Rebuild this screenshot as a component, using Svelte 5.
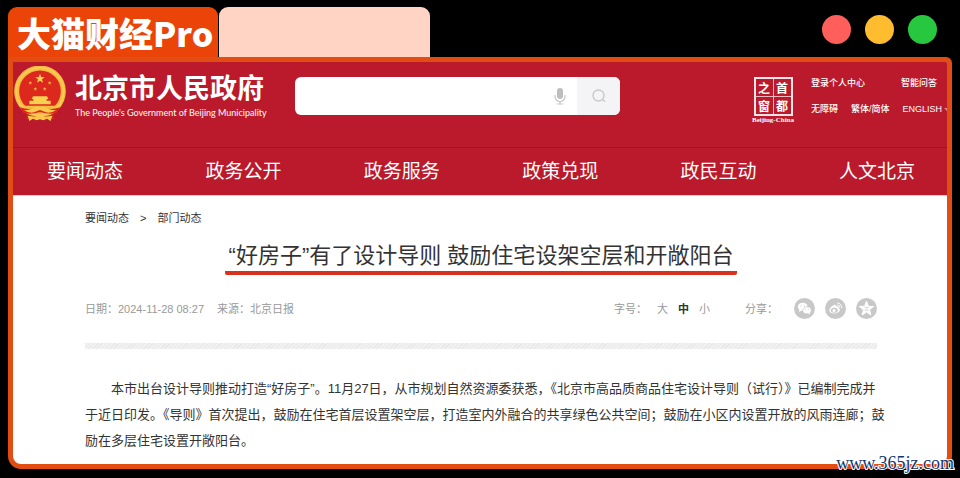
<script>
  const nav = ['要闻动态', '政务公开', '政务服务', '政策兑现', '政民互动', '人文北京'];
  const sizes = ['大', '中', '小'];
  let size = $state('中');
  let query = $state('');

  function star(cx, cy, r) {
    const pts = [];
    for (let i = 0; i < 10; i++) {
      const a = (Math.PI / 5) * i - Math.PI / 2;
      const d = i % 2 ? r * 0.42 : r;
      pts.push(`${(cx + d * Math.cos(a)).toFixed(1)},${(cy + d * Math.sin(a)).toFixed(1)}`);
    }
    return pts.join(' ');
  }
</script>

<div class="page">
  <div class="tabs">
    <div class="tab active">大猫财经Pro</div>
    <div class="tab blank"></div>
    <div class="lights"><i class="red"></i><i class="amber"></i><i class="green"></i></div>
  </div>

  <div class="window">
    <header>
      <a class="brand" href="#home">
        <svg class="emblem" viewBox="0 0 156 168" aria-hidden="true">
          <path d="M42 128 L114 128 L122 160 L34 160 Z" fill="#cc2226" />
          <circle cx="78" cy="76" r="70" fill="#dd291d" stroke="#f5bb43" stroke-width="15" />
          <circle cx="78" cy="76" r="71" fill="none" stroke="#f9ca52" stroke-width="6" />
          <polygon points={star(78, 38, 15)} fill="#fbd050" />
          <polygon points={star(49, 51, 6)} fill="#f6b247" />
          <polygon points={star(107, 51, 6)} fill="#f6b247" />
          <polygon points={star(64, 69, 6)} fill="#f6b247" />
          <polygon points={star(92, 69, 6)} fill="#f6b247" />
          <path d="M57 91 H99 L103 99 H98 V104 H110 V115 H46 V104 H58 V99 H53 Z" fill="#fbd050" />
          <path d="M24 119 H132 L122 131 H34 Z" fill="#f4bd43" />
          <path d="M18 124 Q46 134 62 125 Q78 120 94 125 Q110 134 138 124 L128 141 Q104 146 78 138 Q52 146 28 141 Z" fill="#dc291e" />
          <path d="M56 126 Q78 116 100 126 Q112 134 126 133 Q106 146 88 136 L78 132 L68 136 Q50 146 30 133 Q44 134 56 126 Z" fill="#f8c84a" />
          <path d="M78 145 L92 152 L115 149 L110 165 L99 158 L88 163 L78 160 L68 163 L57 158 L46 165 L41 149 L64 152 Z" fill="#f8c84a" />
        </svg>
        <span class="names">
          <strong>北京市人民政府</strong>
          <small>The People's Government of Beijing Municipality</small>
        </span>
      </a>

      <form class="search" role="search" onsubmit={(e) => e.preventDefault()}>
        <input type="text" aria-label="搜索" bind:value={query} />
        <button type="button" class="mic" aria-label="语音输入">
          <svg viewBox="0 0 12 18" aria-hidden="true">
            <rect x="3" y="1" width="6" height="11" rx="3" fill="#bdbdbd" />
            <path d="M1 8 V9.500 A5 5 0 0 0 11 9.500 V8 M6 14.500 V17 M3 17 H9" fill="none" stroke="#c6c6c6" stroke-width="1.200" />
          </svg>
        </button>
        <button type="submit" class="go" aria-label="检索">
          <svg viewBox="0 0 16 16" aria-hidden="true">
            <circle cx="7.500" cy="7.500" r="5.500" fill="none" stroke="#c9c9cb" stroke-width="1.400" />
            <path d="M11 11 L14.200 13.700" stroke="#c9c9cb" stroke-width="1.400" />
          </svg>
        </button>
      </form>

      <div class="tools">
        <a class="seal" href="#capital">
          <span class="grid"><b>之</b><b>首</b><b>窗</b><b>都</b></span>
          <span class="latin">Beijing-China</span>
        </a>
        <div class="links">
          <div class="row first"><a href="#login">登录个人中心</a><a href="#qa">智能问答</a></div>
          <div class="row">
            <a href="#access">无障碍</a><a href="#script">繁体/简体</a><a href="#en">ENGLISH</a>
          </div>
        </div>
        <svg class="caret" viewBox="0 0 4 5" aria-hidden="true"><path d="M1 1 H4 V4 Z" fill="#d98790" /></svg>
      </div>
    </header>

    <nav>
      {#each nav as item}
        <a href="#{item}">{item}</a>
      {/each}
    </nav>

    <main>
      <div class="crumbs"><a href="#news">要闻动态</a><span>&gt;</span><a href="#dept">部门动态</a></div>
      <h1><span>“好房子”有了设计导则 鼓励住宅设架空层和开敞阳台</span></h1>
      <div class="meta">
        <span class="date">日期：2024-11-28 08:27</span>
        <span>来源：北京日报</span>
        <div class="sizes">
          <span>字号：</span>
          {#each sizes as s}
            <button type="button" class:on={s === size} onclick={() => (size = s)}>{s}</button>
          {/each}
        </div>
        <div class="share">
          <span>分享：</span>
          <a href="#wechat" aria-label="微信">
            <svg viewBox="0 0 21 21" aria-hidden="true">
              <circle cx="10.500" cy="10.500" r="10.500" fill="#c8c8c8" />
              <ellipse cx="8.700" cy="8.700" rx="4.800" ry="4" fill="#fff" />
              <path d="M5.500 11 L4.900 14 L8 12.300 Z" fill="#fff" />
              <ellipse cx="13" cy="12.300" rx="4.200" ry="3.500" fill="#fff" stroke="#c8c8c8" stroke-width=".7" />
              <path d="M14 15 L16 16.600 L15.800 13.800 Z" fill="#fff" />
              <g fill="#c8c8c8"><circle cx="7" cy="7.800" r=".6" /><circle cx="10.200" cy="7.800" r=".6" /><circle cx="11.600" cy="11.500" r=".5" /><circle cx="14.300" cy="11.500" r=".5" /></g>
            </svg>
          </a>
          <a href="#weibo" aria-label="微博">
            <svg viewBox="0 0 21 21" aria-hidden="true">
              <circle cx="10.500" cy="10.500" r="10.500" fill="#c8c8c8" />
              <path d="M9 7 C11 6.200 11.700 7.200 11.300 8.600 C13 8 14 8.600 13.500 10 C15.500 10.800 15.200 13 13.300 14.300 C10.500 16.300 4.500 15.800 4.300 12.600 C4.200 10.700 6.800 7.800 9 7 Z" fill="#fff" />
              <ellipse cx="9.300" cy="12.300" rx="3.500" ry="2.500" fill="#c8c8c8" />
              <circle cx="9" cy="12.500" r="1.500" fill="#fff" />
              <path d="M12.600 5 A4.300 4.300 0 0 1 16.800 9.800 M12.900 7 A2.200 2.200 0 0 1 14.900 9.200" fill="none" stroke="#fff" stroke-width="1" stroke-linecap="round" />
            </svg>
          </a>
          <a href="#qzone" aria-label="QQ空间">
            <svg viewBox="0 0 21 21" aria-hidden="true">
              <circle cx="10.500" cy="10.500" r="10.500" fill="#c8c8c8" />
              <polygon points={star(10.5, 10.8, 7.5)} fill="#fff" stroke="#fff" stroke-width="1" stroke-linejoin="round" />
              <path d="M8.500 9.300 H12.300 L9 12.300 H12.600" fill="none" stroke="#c8c8c8" stroke-width=".7" />
            </svg>
          </a>
        </div>
      </div>
      <div class="rule"></div>
      <p>本市出台设计导则推动打造“好房子”。11月27日，从市规划自然资源委获悉，《北京市高品质商品住宅设计导则（试行）》已编制完成并于近日印发。《导则》首次提出，鼓励在住宅首层设置架空层，打造室内外融合的共享绿色公共空间；鼓励在小区内设置开放的风雨连廊；鼓励在多层住宅设置开敞阳台。</p>
    </main>
  </div>
  <div class="watermark">www.365jz.com</div>
</div>

<style>
  :global(body) { background: #000; }
  .page {
    position: relative;
    box-sizing: border-box;
    min-height: 100vh;
    padding: 7px 8px 9px;
    display: flex;
    flex-direction: column;
    background: #000;
    font-family: 'Liberation Sans', 'Noto Sans CJK SC', sans-serif;
    color: #333;
  }
  a { color: inherit; text-decoration: none; }
  button { border: 0; padding: 0; margin: 0; background: none; font: inherit; color: inherit; }
  svg { display: block; }

  .tabs { display: flex; height: 50px; gap: 1px; }
  .tab { border-radius: 9px 9px 0 0; box-sizing: border-box; }
  .active {
    width: 210px;
    padding-left: 9px;
    background: #ea4408;
    color: #fff;
    font: 900 34px/52px 'Noto Sans CJK SC', sans-serif;
    white-space: nowrap;
  }
  .blank { width: 211px; background: #ffd4c4; }
  .lights { margin-left: auto; padding: 8px 15px 0 0; display: flex; gap: 14px; }
  .lights i { width: 29px; height: 29px; border-radius: 50%; }
  .red { background: #ff5f5a; }
  .amber { background: #ffbc2e; }
  .green { background: #27c840; }

  .window {
    flex: 1;
    border: 5px solid #e24d14;
    border-radius: 0 6px 13px 13px;
    background: #fff;
    overflow: hidden;
  }
  header {
    display: flex;
    align-items: flex-start;
    height: 85px;
    background: #ba1a2b;
    color: #fff;
    border-bottom: 1px solid #a11424;
  }
  .brand { display: flex; width: 282px; padding-top: 4px; }
  .emblem { width: 54px; height: 56px; flex: none; }
  .names { display: flex; flex-direction: column; padding: 6px 0 0 8px; white-space: nowrap; }
  .names strong { font-size: 27px; line-height: 34px; font-weight: 700; }
  .names small { font: 9px/14px Lato, sans-serif; }

  .search {
    display: flex;
    width: 325px;
    height: 38px;
    margin-top: 15px;
    border-radius: 6px;
    overflow: hidden;
    background: #fff;
  }
  .search input { flex: 1; min-width: 0; border: 0; padding: 0 12px; outline: none; background: none; font-size: 13px; }
  .mic { width: 34px; display: grid; place-items: center; }
  .mic svg { width: 12px; height: 18px; }
  .go { width: 43px; background: #f4f4f6; display: grid; place-items: center; }
  .go svg { width: 16px; height: 16px; }

  .tools { margin-left: auto; display: flex; }
  .seal { width: 44px; margin-top: 15px; display: flex; flex-direction: column; align-items: center; }
  .grid {
    box-sizing: border-box;
    width: 39px;
    height: 39px;
    border: 2px solid #fbe3e6;
    display: grid;
    grid-template-columns: 1fr 1fr;
    grid-template-rows: 1fr 1fr;
    gap: 1px;
    background: #f0b9c0;
  }
  .grid b { background: #ba1a2b; font: 700 12px/17px 'Noto Sans CJK SC', sans-serif; text-align: center; }
  .latin { font: 700 7px/9px 'Liberation Serif', serif; white-space: nowrap; }
  .links { width: 131px; padding: 14px 1px 0 16px; font-size: 9px; font-weight: 500; line-height: 14px; white-space: nowrap; display: flex; flex-direction: column; gap: 12px; }
  .row { display: flex; justify-content: space-between; }
  .first { padding-right: 5px; }
  .caret { width: 4px; height: 5px; margin-top: 45px; }

  nav {
    display: flex;
    justify-content: space-between;
    padding: 1px 32px 0 34px;
    background: #ba1a2b;
    color: #fff;
    border-bottom: 1px solid #ffc0c8;
    font-size: 19px;
    line-height: 46px;
    white-space: nowrap;
  }

  main { padding: 14px 62px 0 72px; }
  .crumbs { display: flex; gap: 11px; font-size: 11px; line-height: 16px; }
  h1 { margin: 15px 8px 0 0; text-align: center; font-size: 22px; line-height: 30px; font-weight: 400; }
  h1 span { display: inline-block; border-bottom: 4px solid #d8321f; border-radius: 2px; padding: 0 4px; white-space: nowrap; }
  .meta { display: flex; align-items: center; height: 22px; margin: 22px 8px 0 0; font-size: 11px; color: #999; white-space: nowrap; }
  .date { margin-right: 13px; }
  .sizes { margin-left: auto; display: flex; gap: 10px; }
  .sizes button.on { color: #333; font-weight: 700; }
  .share { display: flex; align-items: center; gap: 10px; margin-left: 35px; }
  .share span { margin-right: 6px; }
  .share svg { width: 21px; height: 21px; }
  .rule { height: 6px; margin: 24px 8px 0 0; background: repeating-linear-gradient(135deg, #e8e8e8 0 1px, #f1f1f1 1px 3px); }
  p { margin: 27px 0 0; font-size: 13px; line-height: 26px; text-indent: 2em; }

  .watermark {
    position: absolute;
    right: 6px;
    bottom: 4px;
    font: 18px/22px 'Liberation Serif', serif;
    color: #12366f;
    -webkit-text-stroke: 2px #fff;
    paint-order: stroke fill;
  }
</style>
